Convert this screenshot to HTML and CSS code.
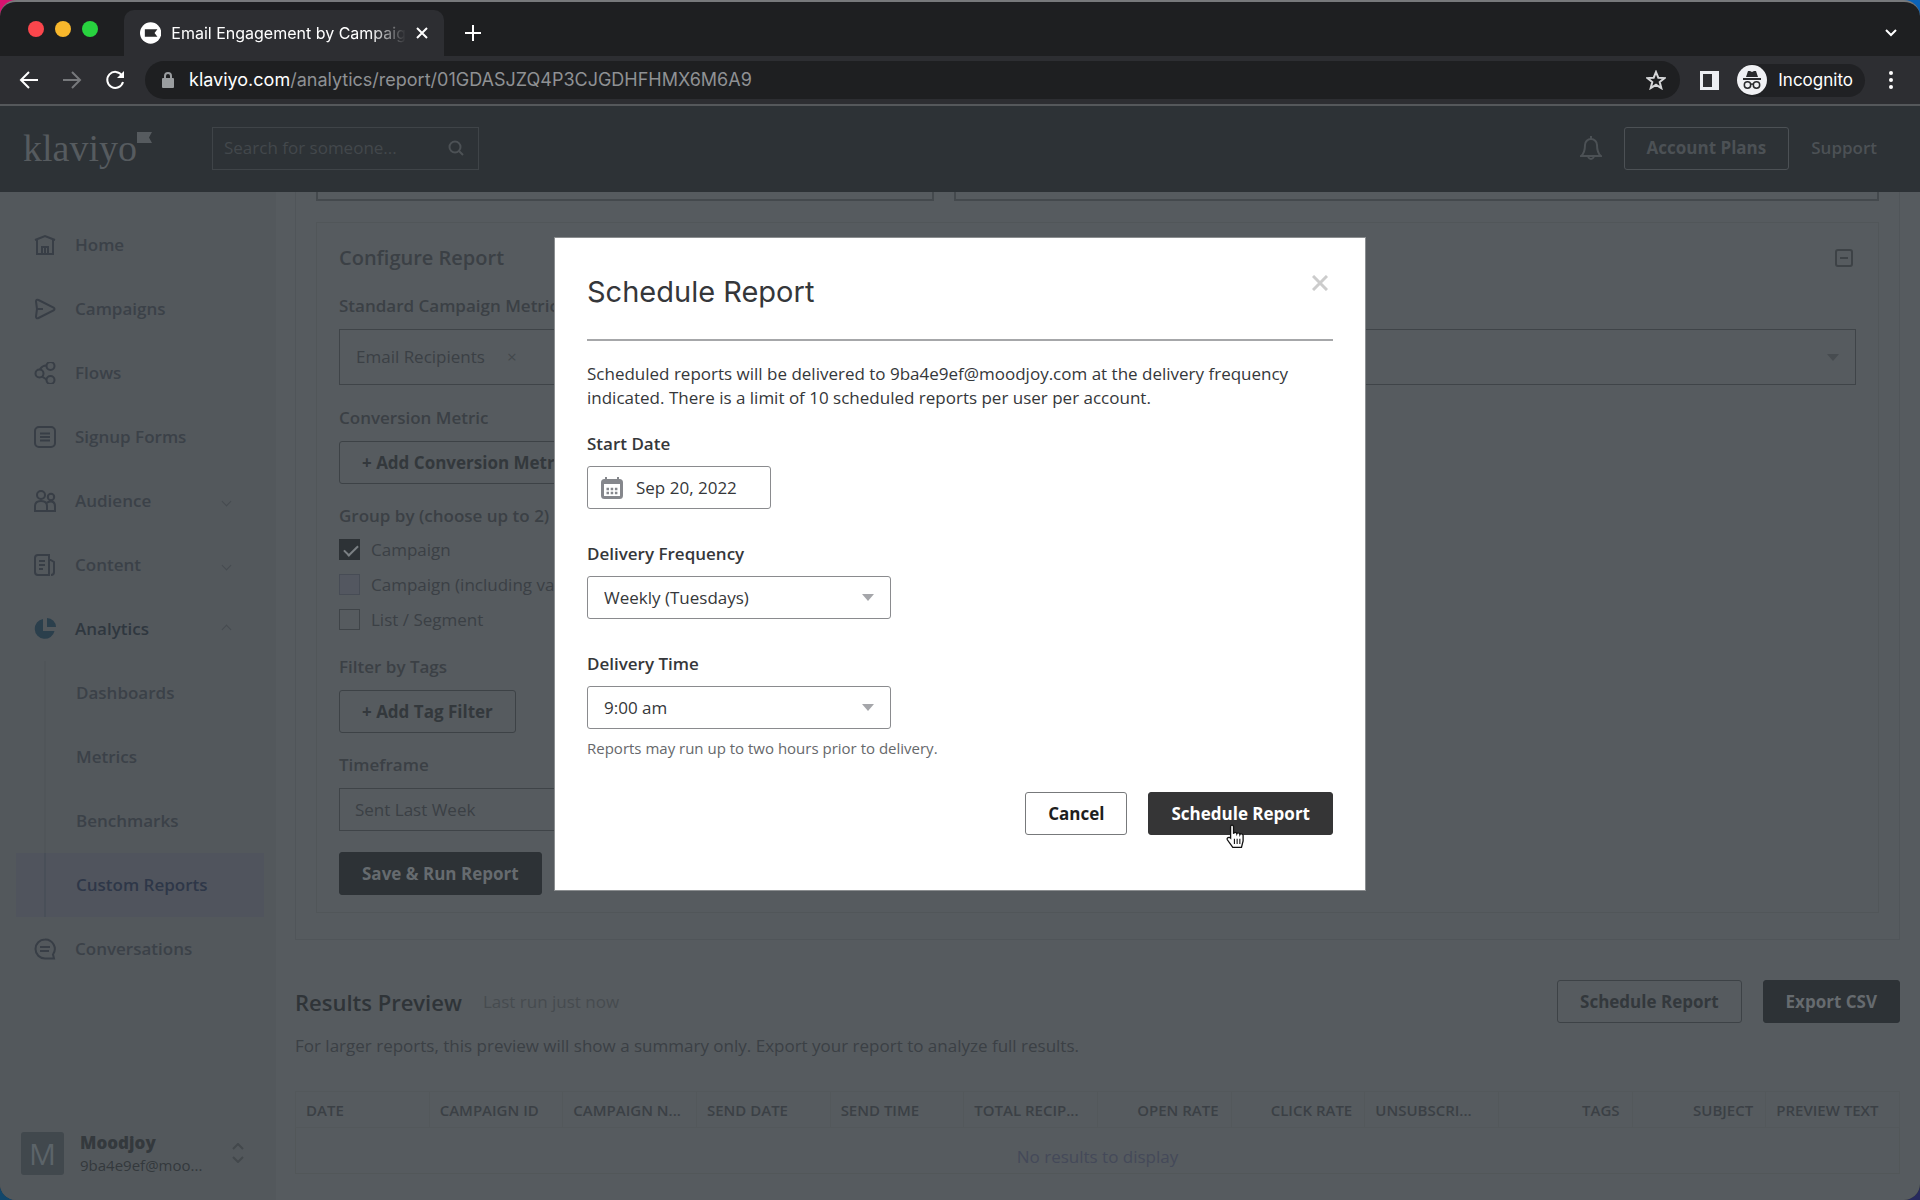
FILE: index.html
```html
<!DOCTYPE html>
<html lang="en">
<head>
<meta charset="utf-8">
<title>Email Engagement by Campaign</title>
<link rel="stylesheet" href="styles.css">
</head>
<body>
<div class="window">
  <div class="tabstrip">
    <div class="lights"><i class="light red"></i><i class="light amber"></i><i class="light green"></i></div>
    <div class="tab">
      <svg class="favicon" viewBox="0 0 22 22" width="22" height="22"><circle cx="11" cy="11" r="11" fill="#fff"/><path d="M5 7h13l-3 4 3 4H5z" fill="#2a2b2d"/></svg>
      <span class="tab-title">Email Engagement by Campaig</span>
      <button class="plain" aria-label="Close tab"><svg viewBox="0 0 12 12" width="12" height="12" stroke="#fff" stroke-width="2"><path d="M1 1l10 10M11 1L1 11"/></svg></button>
    </div>
    <button class="plain newtab" aria-label="New tab"><svg viewBox="0 0 16 16" width="16" height="16" stroke="#fff" stroke-width="2"><path d="M8 0v16M0 8h16"/></svg></button>
    <button class="plain tabsearch" aria-label="Search tabs"><svg viewBox="0 0 12 8" width="12" height="8" fill="none" stroke="#fff" stroke-width="2"><path d="M1 1l5 5 5-5"/></svg></button>
  </div>
  <div class="toolbar">
    <button class="plain tool" aria-label="Back"><svg viewBox="0 0 20 20" width="20" height="20" fill="none" stroke="#fff" stroke-width="2"><path d="M19 10H2M10 2l-8 8 8 8"/></svg></button>
    <button class="plain tool" aria-label="Forward"><svg viewBox="0 0 20 20" width="20" height="20" fill="none" stroke="#77797c" stroke-width="2"><path d="M1 10h17M10 2l8 8-8 8"/></svg></button>
    <button class="plain tool" aria-label="Reload"><svg viewBox="0 0 20 20" width="20" height="20" fill="none" stroke="#fff" stroke-width="2"><path d="M17 5.500A8 8 0 1 0 18 12"/><path d="M19 1v7h-7z" fill="#fff" stroke="none"/></svg></button>
    <div class="omnibox">
      <svg viewBox="0 0 12 16" width="12" height="16"><rect y="6" width="12" height="10" rx="1" fill="#9a9da0"/><path d="M3 7V4a3 3 0 0 1 6 0v3" fill="none" stroke="#9a9da0" stroke-width="2"/></svg>
      <span class="url"><b>klaviyo.com</b>/analytics/report/01GDASJZQ4P3CJGDHFHMX6M6A9</span>
      <svg viewBox="0 0 20 20" width="20" height="20" fill="none" stroke="#d5d6d8" stroke-width="2"><path d="M10 2l2.300 5.700 6.200.4-4.800 4 1.600 6L10 14.800l-5.300 3.300 1.600-6-4.800-4 6.200-.4z"/></svg>
    </div>
    <svg class="panel" viewBox="0 0 19 19" width="19" height="19"><rect width="19" height="19" fill="#eceef2"/><rect x="3" y="3" width="9" height="13" fill="#2d2e32"/></svg>
    <div class="incognito">
      <svg viewBox="0 0 30 30" width="30" height="30"><circle cx="15" cy="15" r="15" fill="#f0f1f4"/><path d="M11 6h2l2 1 2-1h2l2 6H9zM6 13h18v2H6z" fill="#2a2b2d"/><g fill="none" stroke="#2a2b2d" stroke-width="1.500"><circle cx="10.500" cy="20" r="3.200"/><circle cx="19.500" cy="20" r="3.200"/><path d="M13.500 19.500q1.500-1 3 0"/></g></svg>
      <span>Incognito</span>
    </div>
    <button class="plain dots" aria-label="Menu"><svg viewBox="0 0 4 18" width="4" height="18" fill="#fff"><circle cx="2" cy="2" r="2"/><circle cx="2" cy="9" r="2"/><circle cx="2" cy="16" r="2"/></svg></button>
  </div>

  <div class="page">
    <header class="topbar">
      <a class="logo" href="#">klaviyo<svg viewBox="0 0 15 11" width="15" height="11"><path d="M0 0h15l-3 5.500 3 5.500H0z" fill="#565b5f"/></svg></a>
      <div class="search"><input type="text" aria-label="Search" placeholder="Search for someone...">
        <svg viewBox="0 0 16 16" width="16" height="16" fill="none" stroke="#4c5155" stroke-width="2"><circle cx="7" cy="7" r="5.500"/><path d="M11 11l4 4"/></svg></div>
      <svg class="bell" viewBox="0 0 22 24" width="22" height="24" fill="none" stroke="#4c5155" stroke-width="2"><path d="M1 20h20q-4-3-4-11a6 6 0 0 0-12 0q0 8-4 11zM11 3V0M8 21q3 4 6 0"/></svg>
      <button class="btn ghost-dark">Account Plans</button>
      <a class="support" href="#">Support</a>
    </header>

    <div class="body">
      <aside class="sidebar">
        <nav>
          <a class="item" href="#"><svg viewBox="0 0 22 22"><path d="M1 6l10-4 10 4M3 5.500V20h16V5.500M8 20v-7h6v7M11 13v7"/></svg>Home</a>
          <a class="item" href="#"><svg viewBox="0 0 22 22"><path d="M2 3.500q0-2.500 2.500-1.500l15 7.500q2 1.500 0 3l-15 7.500Q2 21 2 18.500l1-7.500zM3 11h6"/></svg>Campaigns</a>
          <a class="item" href="#"><svg viewBox="0 0 22 22"><circle cx="5.500" cy="11.500" r="4"/><circle cx="16.500" cy="4" r="4"/><circle cx="16.500" cy="18" r="4"/><path d="M6 7.500q2-4 6.500-4M8 14.500l4.500 3"/></svg>Flows</a>
          <a class="item" href="#"><svg viewBox="0 0 22 22"><rect x="1" y="1" width="20" height="20" rx="4"/><path d="M6 7.500h10M6 11h10M6 14.500h10"/></svg>Signup Forms</a>
          <a class="item" href="#"><svg viewBox="0 0 22 22"><circle cx="7" cy="5" r="4"/><circle cx="17" cy="7" r="3.200"/><path d="M1 21v-5q0-5 6-5t6 5v5zM13 12.500q8-3 8 4V21h-8"/></svg>Audience<i class="chev down"></i></a>
          <a class="item" href="#"><svg viewBox="0 0 22 22"><path d="M1 4q0-3 3-3h11v20H4q-3 0-3-3zM15 5l5 3v10q0 3-3 3M5 7h6M5 11h6M5 15h4"/></svg>Content<i class="chev down"></i></a>
          <a class="item open" href="#"><svg viewBox="0 0 22 22"><path d="M9 1a10 10 0 1 0 11.500 12H9zM13 0v9h9a9 9 0 0 0-9-9z" fill="#2b3f4c" stroke="none"/></svg>Analytics<i class="chev up"></i></a>
          <div class="subnav">
            <a class="sub" href="#">Dashboards</a>
            <a class="sub" href="#">Metrics</a>
            <a class="sub" href="#">Benchmarks</a>
            <a class="sub current" href="#">Custom Reports</a>
          </div>
          <a class="item" href="#"><svg viewBox="0 0 22 22"><path d="M11 1.500a9.500 9.500 0 1 0 0 19h9l-1-4a9.500 9.500 0 0 0-8-15zM6 9h10M6 13h9"/></svg>Conversations</a>
        </nav>
        <div class="account">
          <span class="avatar">M</span>
          <div class="who"><strong>Moodjoy</strong><span>9ba4e9ef@moo...</span></div>
          <svg viewBox="0 0 12 20" width="12" height="20" fill="none" stroke="#43484c" stroke-width="2"><path d="M1 6l5-5 5 5M1 14l5 5 5-5"/></svg>
        </div>
      </aside>

      <main class="main">
        <section class="report">
          <div class="scrolled"><div class="stub narrow"></div><div class="stub"></div></div>
          <div class="config">
            <div class="config-head"><h2>Configure Report</h2>
              <button class="plain" aria-label="Collapse"><svg viewBox="0 0 18 18" width="18" height="18" fill="none" stroke="#3d4246" stroke-width="2"><rect x="1" y="1" width="16" height="16" rx="2"/><path d="M5 9h8"/></svg></button></div>
            <label class="label" for="metrics">Standard Campaign Metrics</label>
            <div class="multi"><span class="chip">Email Recipients <button class="plain" aria-label="Remove">×</button></span><input id="metrics" type="text"><i class="caret dim"></i></div>
            <span class="label">Conversion Metric</span>
            <button class="btn outline">+ Add Conversion Metric</button>
            <fieldset class="group">
              <legend class="label">Group by (choose up to 2)</legend>
              <label class="check"><input type="checkbox" checked>Campaign</label>
              <label class="check"><input type="checkbox" disabled>Campaign (including variations)</label>
              <label class="check"><input type="checkbox">List / Segment</label>
            </fieldset>
            <span class="label">Filter by Tags</span>
            <button class="btn outline">+ Add Tag Filter</button>
            <label class="label" for="timeframe">Timeframe</label>
            <select id="timeframe" class="timeframe"><option>Sent Last Week</option></select>
            <button class="btn solid-dim">Save &amp; Run Report</button>
          </div>
        </section>

        <section class="results">
          <div class="results-head">
            <h2>Results Preview</h2><span class="last">Last run just now</span>
            <button class="btn outline">Schedule Report</button>
            <button class="btn solid-dim">Export CSV</button>
          </div>
          <p>For larger reports, this preview will show a summary only. Export your report to analyze full results.</p>
          <table>
            <thead><tr><th>Date</th><th>Campaign ID</th><th>Campaign N...</th><th>Send Date</th><th>Send Time</th><th>Total Recip...</th><th class="num">Open Rate</th><th class="num">Click Rate</th><th>Unsubscri...</th><th class="num">Tags</th><th class="num">Subject</th><th>Preview Text</th></tr></thead>
            <tbody><tr><td colspan="12">No results to display</td></tr></tbody>
          </table>
        </section>
      </main>
    </div>

    <div class="backdrop">
      <form class="modal" role="dialog" aria-labelledby="dialog-title">
        <div class="modal-head"><h1 id="dialog-title">Schedule Report</h1>
          <button type="button" class="plain" aria-label="Close"><svg viewBox="0 0 16 16" width="16" height="16" stroke="#ccc" stroke-width="3"><path d="M1 1l14 14M15 1L1 15"/></svg></button></div>
        <p class="intro">Scheduled reports will be delivered to 9ba4e9ef@moodjoy.com at the delivery frequency indicated. There is a limit of 10 scheduled reports per user per account.</p>
        <div class="field">
          <label for="start">Start Date</label>
          <div class="date"><svg viewBox="0 0 22 22" width="22" height="22"><path d="M5 0v4M17 0v4" stroke="#85878c" stroke-width="2"/><rect x="1.500" y="3.500" width="19" height="17" rx="2" fill="none" stroke="#85878c" stroke-width="3"/><path d="M2 3h18v4H2z" fill="#85878c"/><path d="M5.500 12h11M5.500 16h11" stroke="#85878c" stroke-width="2.500" stroke-dasharray="2.500 1.700"/></svg><input id="start" type="text" value="Sep 20, 2022"></div>
        </div>
        <div class="field">
          <label for="freq">Delivery Frequency</label>
          <div class="select"><select id="freq"><option>Weekly (Tuesdays)</option></select><i class="caret"></i></div>
        </div>
        <div class="field">
          <label for="time">Delivery Time</label>
          <div class="select"><select id="time"><option>9:00 am</option></select><i class="caret"></i></div>
          <small>Reports may run up to two hours prior to delivery.</small>
        </div>
        <div class="actions">
          <button type="button" class="btn cancel">Cancel</button>
          <button type="button" class="btn submit">Schedule Report
            <svg class="pointer" viewBox="0 0 17 23" width="19" height="25"><path d="M4 13V2.500q0-1.500 1.300-1.500T6.700 2.500V9q.3-1.300 1.500-1.300T9.700 9q.3-1 1.400-.9T12.500 9.700q.3-.9 1.500-.7t1.500 1.500v5l-1.500 6H6L1 14.500q-.6-1.500.7-2T4 13z" fill="#fff" stroke="#111" stroke-width="1.200"/><path d="M7.500 13.500v5M10 13.500v5M12.500 13.500v5" stroke="#111"/></svg></button>
        </div>
      </form>
    </div>
  </div>
</div>
</body>
</html>
```
FILE: styles.css
```css
* { box-sizing: border-box; }
body {
  margin: 0;
  background: linear-gradient(to right, transparent 50%, #0b63b8 50%) top / 100% 50% no-repeat,
    linear-gradient(to right, #d6136f 50%, transparent 50%) top / 100% 50% no-repeat,
    linear-gradient(to right, #12476b 50%, #272a5e 50%);
  color: #3b4045;
  font: 17px/24px "Open Sans", Lato, sans-serif;
}
button, input, select { font: inherit; color: inherit; }
input, select { min-width: 0; border: 0; background: none; padding: 0; appearance: none; }
h1, h2, p { margin: 0; }
a { color: inherit; text-decoration: none; }
.plain { display: flex; padding: 0; border: 0; background: none; }

/* Browser frame */
.window {
  display: flex; flex-direction: column;
  min-height: 100vh;
  border-top: 2px solid #77797b; border-radius: 16px;
  background: #1e1f21; overflow: hidden;
}
.tabstrip, .toolbar { font-family: Inter, Roboto, sans-serif; color: #fff; }
.tabstrip { display: flex; align-items: center; height: 54px; padding: 8px 23px 0 28px; }
.lights { display: flex; gap: 11px; width: 96px; margin-bottom: 8px; }
.light { width: 16px; height: 16px; border-radius: 50%; }
.red { background: #fb464c; }
.amber { background: #f8b72c; }
.green { background: #28d33f; }
.tab {
  display: flex; align-items: center; align-self: flex-end; gap: 10px;
  width: 320px; height: 46px; padding: 0 16px;
  border-radius: 10px 10px 0 0; background: #2d2e32;
}
.tab-title {
  flex: 1; white-space: nowrap; font-size: 16px;
  mask-image: linear-gradient(to left, transparent, #000 36px);
}
.newtab { margin-left: 21px; }
.tabsearch { margin-left: auto; }
.toolbar { display: flex; align-items: center; height: 50px; padding: 0 27px 0 19px; border-bottom: 2px solid #55585b; background: #2d2e32; }
.tool { margin-right: 23px; }
.omnibox {
  display: flex; align-items: center; flex: 1; gap: 15px;
  height: 38px; margin: 0 20px 0 -3px; padding: 0 14px 0 17px;
  border-radius: 19px; background: #1e1f21; color: #8f9194;
}
.url { flex: 1; font-size: 18px; }
.url b { font-weight: 400; color: #fff; }
.incognito {
  display: flex; align-items: center; gap: 11px;
  height: 33px; margin: 0 24px 0 18px; padding-right: 12px;
  border-radius: 17px; background: #202124; font-size: 17px;
}

/* App header */
.page { position: relative; display: flex; flex-direction: column; flex: 1; background: #565b5f; }
.topbar {
  display: flex; align-items: center; height: 86px; padding: 0 43px 2px 23px;
  background: #2d3236; color: #4c5155;
}
.logo { display: flex; width: 189px; color: #565b5f; font: 38px/44px "Liberation Serif", serif; }
.logo svg { margin-top: 6px; }
.search {
  display: flex; align-items: center; width: 267px; height: 43px; padding: 0 14px 0 11px;
  border: 1px solid #3f4448;
}
.search input { flex: 1; }
.search input::placeholder { color: #43484c; opacity: 1; }
.bell { margin: 0 22px 0 auto; }
.btn {
  height: 43px; padding: 0 22px; border: 1px solid; border-radius: 3px;
  background: none; font-size: 17px; font-weight: 700; white-space: nowrap;
}
.ghost-dark { margin-right: 22px; border-color: #4c5155; }
.support { font-weight: 600; }
.outline { border-color: #3d4246; color: #33383c; }
.solid-dim { border-color: #2d3236; background: #2d3236; color: #666b6f; }

/* Sidebar */
.body { display: flex; flex: 1; }
.sidebar {
  display: flex; flex-direction: column; width: 276px; padding: 21px 12px 25px 16px;
  background: #53585c; color: #3b4148; font-weight: 600;
}
.item { display: flex; align-items: center; height: 64px; padding: 0 34px 0 18px; }
.item svg { width: 22px; height: 22px; margin-right: 19px; fill: none; stroke: #383e46; stroke-width: 2; }
.chev { width: 7px; height: 7px; margin-left: auto; border: solid #464b50; border-width: 1px 1px 0 0; }
.up { transform: rotate(-45deg); }
.down { transform: rotate(135deg); }
.open { color: #2f373f; }
.sub { display: flex; align-items: center; height: 64px; margin-left: 28px; padding-left: 30px; border-left: 2px solid #505559; }
.current { margin-left: 0; padding-left: 60px; border: 0; background: linear-gradient(to right, transparent 28px, #494f58 28px 30px, transparent 30px) #50545d; color: #2e3748; }
.account { display: flex; align-items: center; margin-top: auto; padding: 0 20px 0 5px; }
.avatar { width: 43px; height: 43px; margin-right: 16px; border-radius: 3px; background: #41484d; color: #5c6469; font-size: 30px; font-weight: 400; line-height: 43px; text-align: center; }
.who { display: flex; flex-direction: column; margin-right: auto; color: #34393d; }
.who span { font-size: 15px; line-height: 20px; font-weight: 400; }

/* Report configuration */
.main { flex: 1; min-width: 0; padding: 0 20px 0 19px; }
.report { padding: 0 20px 26px; border: solid #505559; border-width: 0 1px 1px; }
.scrolled { display: flex; gap: 20px; margin-bottom: 21px; }
.stub { flex: 3; height: 9px; border: solid #44494d; border-width: 0 2px 2px; }
.narrow { flex: 2; }
.config { display: flex; flex-direction: column; align-items: flex-start; padding: 23px 22px 17px; border: 1px solid #515659; }
.config > .btn { margin-bottom: 20px; }
.config-head { display: flex; align-items: center; justify-content: space-between; align-self: stretch; margin-bottom: 24px; padding-right: 3px; }
.config-head h2 { font-size: 20px; font-weight: 600; }
.label { margin-bottom: 11px; padding: 0; font-weight: 600; }
.multi {
  display: flex; align-items: center; align-self: stretch;
  height: 56px; margin-bottom: 21px; padding: 0 16px; border: 1px solid #3f4448;
}
.multi input { flex: 1; }
.chip { display: flex; gap: 22px; }
.chip .plain { color: #43484c; }
.caret { width: 0; border: 6px solid transparent; border-top: 7px solid #a5a6aa; border-bottom: 0; }
.dim { border-top-color: #474c50; }
.group { margin: 0 0 25px; padding: 0; border: 0; }
.check { display: flex; align-items: center; gap: 11px; height: 21px; }
.check + .check { margin-top: 14px; }
.check input { width: 21px; height: 21px; margin: 0; border: 1px solid #3f4448; }
.check input:disabled { border-color: #474c55; background: #535760; }
.check input:checked { background: #2d3236; border-color: #2d3236; }
.check input:checked::before { content: ""; display: block; width: 12px; height: 6px; margin: 5px 4px; border: solid #7b8084; border-width: 0 0 2px 2px; transform: rotate(-45deg); }
.timeframe { width: 304px; height: 43px; margin-bottom: 21px; padding: 0 15px; border: 1px solid #3f4448; }
.config > .btn.solid-dim { margin-bottom: 0; }

/* Results */
.results { padding: 40px 0 20px; }
.results-head { display: flex; align-items: center; gap: 21px; margin-bottom: 11px; }
.results-head h2 { font-size: 22px; font-weight: 600; color: #2f3438; }
.last { margin-right: auto; color: #464b4f; }
table { width: 100%; margin-top: 33px; table-layout: fixed; border-collapse: collapse; border: 1px solid #525759; }
th {
  height: 36px; padding: 0 12px 0 10px; border: 1px solid #53585b;
  font-size: 15px; font-weight: 600; text-align: left; text-transform: uppercase; white-space: nowrap;
}
.num { text-align: right; }
td { height: 46px; padding: 12px 0 0; color: #444959; text-align: center; }

/* Dialog */
.backdrop { position: absolute; inset: 0; display: flex; align-items: flex-start; justify-content: center; padding-top: 131px; }
.modal {
  display: flex; flex-direction: column; width: 812px; padding: 31px 32px 55px;
  border: 1px solid #8b8e90; background: #fff; color: #35373a;
}
.modal-head { display: flex; align-items: flex-start; justify-content: space-between; height: 72px; padding: 3px 5px 0 0; border-bottom: 2px solid #a6a7a9; }
.modal-head h1 { font: 400 29px/40px Inter, Roboto, sans-serif; }
.modal-head .plain { margin-top: 3px; }
.intro { margin: 21px 0 22px; }
.field { display: flex; flex-direction: column; align-items: flex-start; margin-bottom: 33px; }
.field label { margin-bottom: 10px; font-weight: 600; }
.date, .select { display: flex; align-items: center; height: 43px; border: 1px solid #8a8b8e; border-radius: 3px; }
.date { gap: 13px; width: 184px; padding: 0 13px; }
.date input { flex: 1; }
.select { width: 304px; padding: 0 16px; }
.select select { flex: 1; }
.field small { margin-top: 8px; color: #66686b; font-size: 15px; line-height: 22px; }
.actions { display: flex; justify-content: flex-end; gap: 21px; }
.cancel { border-color: #77797b; color: #1d1e20; }
.submit { position: relative; border-color: #353536; background: #353536; color: #fff; }
.pointer { position: absolute; top: 31px; left: 77px; }
```
